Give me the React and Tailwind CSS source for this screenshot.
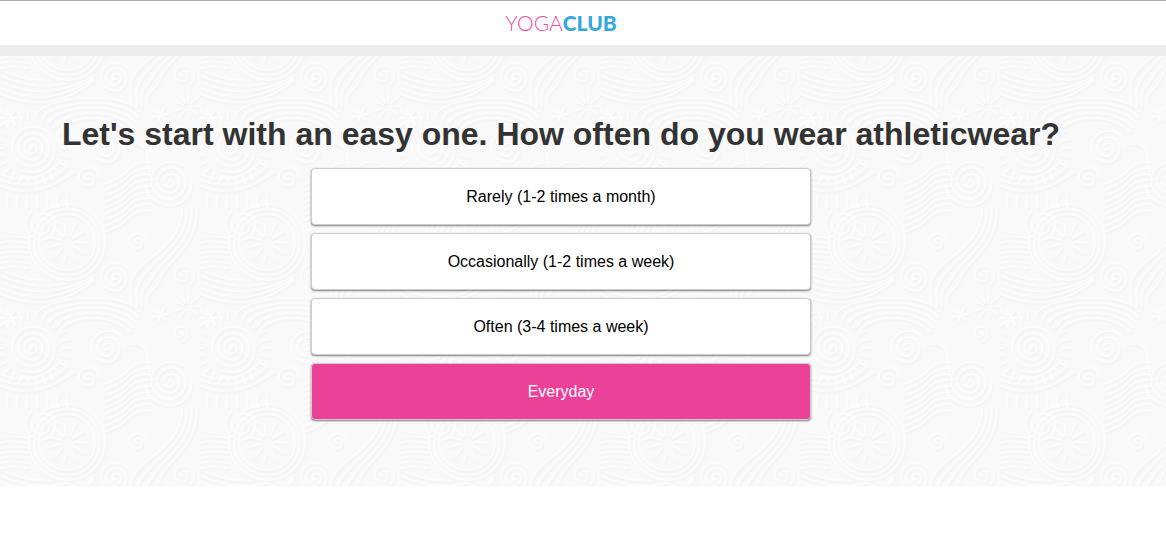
import React, { useState } from "react";
import clsx from "clsx";

const OPTIONS = [
  "Rarely (1-2 times a month)",
  "Occasionally (1-2 times a week)",
  "Often (3-4 times a week)",
  "Everyday",
];

// x, y, radius, turns, start angle
const SPIRALS = [
  [115, 22, 17, 3, 0],
  [183, 19, 12, 2, 1],
  [32, 92, 25, 4, 2],
  [107, 92, 19, 3, 0],
  [170, 126, 25, 4, 3],
  [88, 122, 12, 2, 0],
  [42, 169, 17, 3, 4],
  [137, 186, 10, 2, 0],
  [180, 77, 9, 2, 2],
];

// x, y, inner radius, outer radius, petals
const FLOWERS = [
  [67, 186, 7, 20, 11],
  [187, 50, 4, 13, 9],
  [160, 58, 2, 8, 7],
  [8, 62, 3, 10, 8],
  [32, 92, 30, 38, 26],
];

const spiralPath = ([cx, cy, radius, turns, start]) => {
  const steps = turns * 16;
  return Array.from({ length: steps + 1 }, (_, i) => {
    const angle = start + (i / steps) * turns * Math.PI * 2;
    const r = (i / steps) * radius;
    const x = (cx + Math.cos(angle) * r).toFixed(1);
    const y = (cy + Math.sin(angle) * r).toFixed(1);
    return `${i ? "L" : "M"}${x} ${y}`;
  }).join("");
};

const petalPath = ([cx, cy, inner, outer, count]) =>
  Array.from({ length: count }, (_, i) => {
    const a = (i / count) * Math.PI * 2;
    const point = (r) =>
      `${(cx + Math.cos(a) * r).toFixed(1)} ${(cy + Math.sin(a) * r).toFixed(1)}`;
    return `M${point(inner)}L${point(outer)}`;
  }).join("");

const PaisleyArt = () => (
  <>
    {/* wide arcs over the middle spirals */}
    {[0, 5, 10, 15, 20].map((d) => (
      <path
        key={d}
        d={`M${58 - d} ${76 - d}C${72 - d} ${58 - d} ${108 + d} ${56 - d} ${130 + d / 2} ${76 - d}`}
      />
    ))}
    {[0, 6, 12].map((d) => (
      <path key={d} d={`M0 ${118 + d}Q36 ${132 + d} ${62 + d} ${104 + d}`} />
    ))}
    {/* diagonal waves */}
    {[0, 6, 12, 18, 24, 30, 36, 42, 48].map((d) => (
      <path key={d} d={`M104 ${128 + d}Q122 ${122 + d} 128 ${114 + d}T150 ${106 + d}`} />
    ))}
    {/* long tail that runs into the next tile */}
    {[0, 5, 10, 15].map((d) => (
      <path
        key={d}
        d={`M${182 + d} 150C${184 + d} ${176 + d} 166 ${190 + d} ${146 + d} ${206 + d}S${130 + d} 232 ${132 + d} 250`}
      />
    ))}
    {[0, 5, 10, 15, 20, 25, 30].map((d) => (
      <path key={d} d={`M0 ${182 + d}Q14 ${179 + d} 28 ${182 + d}`} />
    ))}
    {/* top left strokes */}
    {[0, 6, 12, 18, 24].map((d) => (
      <path key={d} d={`M0 ${14 + d}Q50 ${36 + d} 94 ${12 + d / 2}`} />
    ))}
    {[8, 18, 28, 38, 48, 58, 68].map((x) => (
      <path key={x} d={`M${x} 140q-3 6 0 11`} />
    ))}
    {[28, 33, 38].map((r) => (
      <circle key={r} cx="67" cy="186" r={r} />
    ))}
    <path d="M132 88q14 -2 16 16t6 20" />
    {SPIRALS.map((s) => (
      <path key={s.join("-")} d={spiralPath(s)} />
    ))}
    {FLOWERS.map((f) => (
      <path key={f.join("-")} d={petalPath(f)} />
    ))}
  </>
);

const PaisleyBackground = () => (
  <svg className="absolute inset-0 h-full w-full" aria-hidden="true">
    <defs>
      <g id="paisley-art" fill="none" strokeLinecap="round">
        <PaisleyArt />
      </g>
      <pattern id="paisley" width="200" height="200" patternUnits="userSpaceOnUse">
        <rect width="200" height="200" fill="#f9f9f9" />
        {/* repeated one tile up so that the lower shapes wrap round */}
        {[0, -200].map((y) => (
          <g key={y}>
            <use href="#paisley-art" y={y + 2} x="1" stroke="#f6f6f6" strokeWidth="2" />
            <use href="#paisley-art" y={y} stroke="#fcfcfc" strokeWidth="2" />
          </g>
        ))}
      </pattern>
    </defs>
    <rect width="100%" height="100%" fill="url(#paisley)" />
  </svg>
);

const Header = () => (
  <header className="flex h-14 justify-center border-t border-b-11 border-t-[#b0b0b0] border-b-[#ededed] bg-white pr-11">
    <a
      href="#"
      aria-label="YogaClub"
      className="flex items-center pb-0.5 font-[Lato,sans-serif] text-[21px] leading-none text-[#ec4fa4]"
    >
      <span className="font-light">YOGA</span>
      <span className="font-black text-[#35a8e0]">CLUB</span>
    </a>
  </header>
);

const App = () => {
  const [selected, setSelected] = useState("Everyday");

  return (
    <div className="min-h-screen bg-white font-['Liberation_Sans',Arial,sans-serif]">
      <Header />
      <main className="relative pt-14 pr-11 pb-[66px]">
        <PaisleyBackground />
        <div className="relative flex flex-col items-center">
          <h1 className="text-center text-[32px] leading-11 font-bold text-[#333333]">
            Let's start with an easy one. How often do you wear athleticwear?
          </h1>
          <div className="mt-3 flex w-full max-w-[500px] flex-col gap-2">
            {OPTIONS.map((option) => (
              <button
                key={option}
                type="button"
                aria-pressed={selected === option}
                onClick={() => setSelected(option)}
                className={clsx(
                  "h-[57px] w-full cursor-pointer rounded border border-[#cccccc] text-base shadow-[0_1px_2px_rgba(0,0,0,0.5)]",
                  selected === option ? "bg-[#eb4198] text-white" : "bg-white text-black"
                )}
              >
                {option}
              </button>
            ))}
          </div>
        </div>
      </main>
    </div>
  );
};

export default App;
